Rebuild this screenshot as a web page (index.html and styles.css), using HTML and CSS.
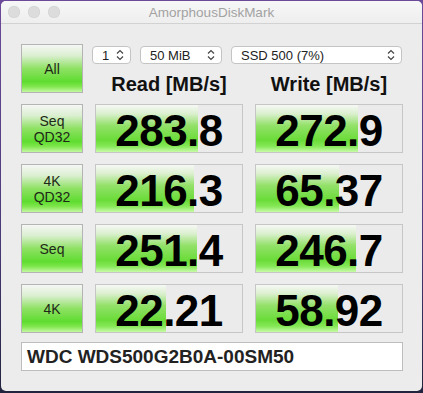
FILE: index.html
```html
<!DOCTYPE html>
<html lang="en">
<head>
<meta charset="UTF-8">
<title>AmorphousDiskMark</title>
<link rel="stylesheet" href="styles.css">
</head>
<body>
<div class="window">
    <div class="titlebar">
        <div class="lights">
            <span class="light"></span>
            <span class="light"></span>
            <span class="light"></span>
        </div>
        <div class="title">AmorphousDiskMark</div>
    </div>
    <div class="content">
        <div class="board">
            <div class="btn">All</div>
            <div class="head">
                <div class="selects">
                    <div class="select s-count">1<svg viewBox="0 0 8 12"><path d="M1 4.5 L4 1.5 L7 4.5 M1 7.5 L4 10.5 L7 7.5"/></svg></div>
                    <div class="select s-size">50 MiB<svg viewBox="0 0 8 12"><path d="M1 4.5 L4 1.5 L7 4.5 M1 7.5 L4 10.5 L7 7.5"/></svg></div>
                    <div class="select s-drive">SSD 500 (7%)<svg viewBox="0 0 8 12"><path d="M1 4.5 L4 1.5 L7 4.5 M1 7.5 L4 10.5 L7 7.5"/></svg></div>
                </div>
                <div class="labels">
                    <div class="label">Read [MB/s]</div>
                    <div class="label">Write [MB/s]</div>
                </div>
            </div>

            <div class="btn">Seq<br>QD32</div>
            <div class="result" style="background-size: 102px 100%">283.8</div>
            <div class="result" style="background-size: 102px 100%">272.9</div>

            <div class="btn">4K<br>QD32</div>
            <div class="result" style="background-size: 98px 100%">216.3</div>
            <div class="result" style="background-size: 83px 100%">65.37</div>

            <div class="btn">Seq</div>
            <div class="result" style="background-size: 101px 100%">251.4</div>
            <div class="result" style="background-size: 100px 100%">246.7</div>

            <div class="btn">4K</div>
            <div class="result" style="background-size: 70px 100%">22.21</div>
            <div class="result" style="background-size: 82px 100%">58.92</div>
        </div>
        <div class="drive">WDC WDS500G2B0A-00SM50</div>
    </div>
</div>
</body>
</html>
```

FILE: styles.css
```css
body {
    margin: 0;
    padding: 1px 1px 0 1px;
    height: 393px;
    box-sizing: border-box;
    overflow: hidden;
    background: linear-gradient(to bottom, #6c4a9a 0%, #4a3a78 60%, #22243e 100%);
    font-family: "Liberation Sans", Arial, sans-serif;
}
.window {
    width: 421px;
    height: 390px;
    background-color: #ececec;
    border-radius: 5px;
    overflow: hidden;
}
.titlebar {
    height: 22px;
    background: linear-gradient(to bottom, #f7f7f7, #eeeeee);
    border-bottom: 1px solid #d2d2d2;
    display: flex;
    align-items: center;
    position: relative;
}
.lights {
    display: flex;
    gap: 8px;
    padding-left: 7px;
}
.light {
    width: 12px;
    height: 12px;
    border-radius: 50%;
    background-color: #dcdcdc;
    box-shadow: inset 0 0 0 0.5px #cfcfcf;
}
.title {
    position: absolute;
    left: 0;
    right: 0;
    text-align: center;
    font-size: 13.5px;
    color: #a2a2a2;
}
.content {
    padding: 20px 0 0 20px;
}
.board {
    display: grid;
    grid-template-columns: 62px 148px 148px;
    grid-auto-rows: 49px;
    column-gap: 12px;
    row-gap: 11px;
}
.btn {
    box-sizing: border-box;
    border: 1px solid #b4b4b4;
    background: linear-gradient(to bottom, #f5f7f4 0%, #dcefd2 22%, #8fe164 50%, #5fdc30 78%, #7fe64c 88%, #c4f8a2 100%);
    display: flex;
    align-items: center;
    justify-content: center;
    text-align: center;
    font-size: 14px;
    line-height: 16px;
    color: #1e2818;
}
.head {
    grid-column: 2 / 4;
    display: flex;
    flex-direction: column;
    padding-top: 2px;
}
.selects {
    display: flex;
    gap: 9px;
    margin-left: -3px;
}
.select {
    box-sizing: border-box;
    height: 18px;
    background-color: #fff;
    border: 1px solid #c4c4c4;
    border-radius: 4px;
    display: flex;
    align-items: center;
    justify-content: space-between;
    padding: 0 6px 0 9px;
    font-size: 13px;
    color: #222;
}
.select svg {
    width: 8px;
    height: 12px;
    fill: none;
    stroke: #444;
    stroke-width: 1.2;
}
.s-count { width: 39px; }
.s-size { width: 82px; }
.s-drive { width: 171px; }
.labels {
    display: grid;
    grid-template-columns: 148px 148px;
    column-gap: 12px;
    margin-top: 9px;
}
.label {
    text-align: center;
    font-size: 20px;
    font-weight: bold;
    color: #111;
}
.result {
    box-sizing: border-box;
    height: 49px;
    padding-top: 4px;
    border: 1px solid #c6c6c6;
    background-color: #ebebeb;
    background-image: linear-gradient(to bottom, #f6f8f5 0%, #dcf0d0 18%, #92e168 44%, #6adc38 75%, #86e858 88%, #c8fba8 100%);
    background-repeat: no-repeat;
    text-align: center;
    font-size: 44px;
    font-weight: bold;
    line-height: 43px;
    letter-spacing: -0.5px;
    color: #000;
}
.drive {
    box-sizing: border-box;
    width: 382px;
    height: 29px;
    margin-top: 9px;
    background-color: #fff;
    border: 1px solid #bdbdbd;
    padding-left: 5px;
    font-size: 19px;
    font-weight: bold;
    line-height: 28px;
    color: #222;
}
```
